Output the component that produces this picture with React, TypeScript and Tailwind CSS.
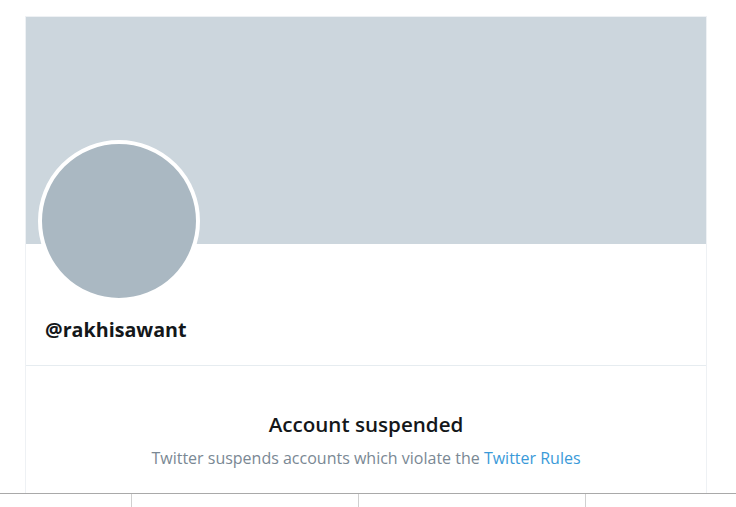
const font = { fontFamily: '"Open Sans", "Noto Sans", sans-serif' };

export default function App() {
  return (
    <div className="h-[507px] w-[736px] overflow-hidden bg-white" style={font}>
      {/* Profile card */}
      <div className="pl-[25px] pt-[16px]">
        <div className="flex h-[477px] w-[682px] flex-col border-x border-t border-[#eef1f4]">
          {/* Header banner */}
          <div className="h-[227px] w-full bg-[#ccd6dd]" />

          {/* Avatar */}
          <div className="-mt-[104px] ml-[12px] h-[162px] w-[162px] rounded-full border-[4px] border-white bg-[#aab8c2]" />

          {/* Handle */}
          <div className="mt-[14px] px-[19px] pb-[21px]">
            <h1 className="text-[19.7px] font-bold leading-[28px] text-[#14171a]">@rakhisawant</h1>
          </div>

          <div className="h-px w-full bg-[#e6ecf0]" />

          {/* Suspended notice */}
          <div className="flex flex-col items-center pt-[44px]">
            <h2 className="text-[20.6px] font-semibold leading-[28px] text-[#14171a]">Account suspended</h2>
            <p className="mt-[9px] text-[16px] leading-[22px] text-[#7a8894]">
              Twitter suspends accounts which violate the{' '}
              <a href="#" className="text-[#3a9ad9]">
                Twitter Rules
              </a>
            </p>
          </div>
        </div>
      </div>

      {/* Bottom tab strip */}
      <div className="flex h-[14px] w-full border-t border-[#a9a9a9]">
        <div className="w-[131px]" />
        <div className="w-[227px] border-l border-[#d0d0d0]" />
        <div className="w-[227px] border-l border-[#d0d0d0]" />
        <div className="flex-1 border-l border-[#d0d0d0]" />
      </div>
    </div>
  );
}
